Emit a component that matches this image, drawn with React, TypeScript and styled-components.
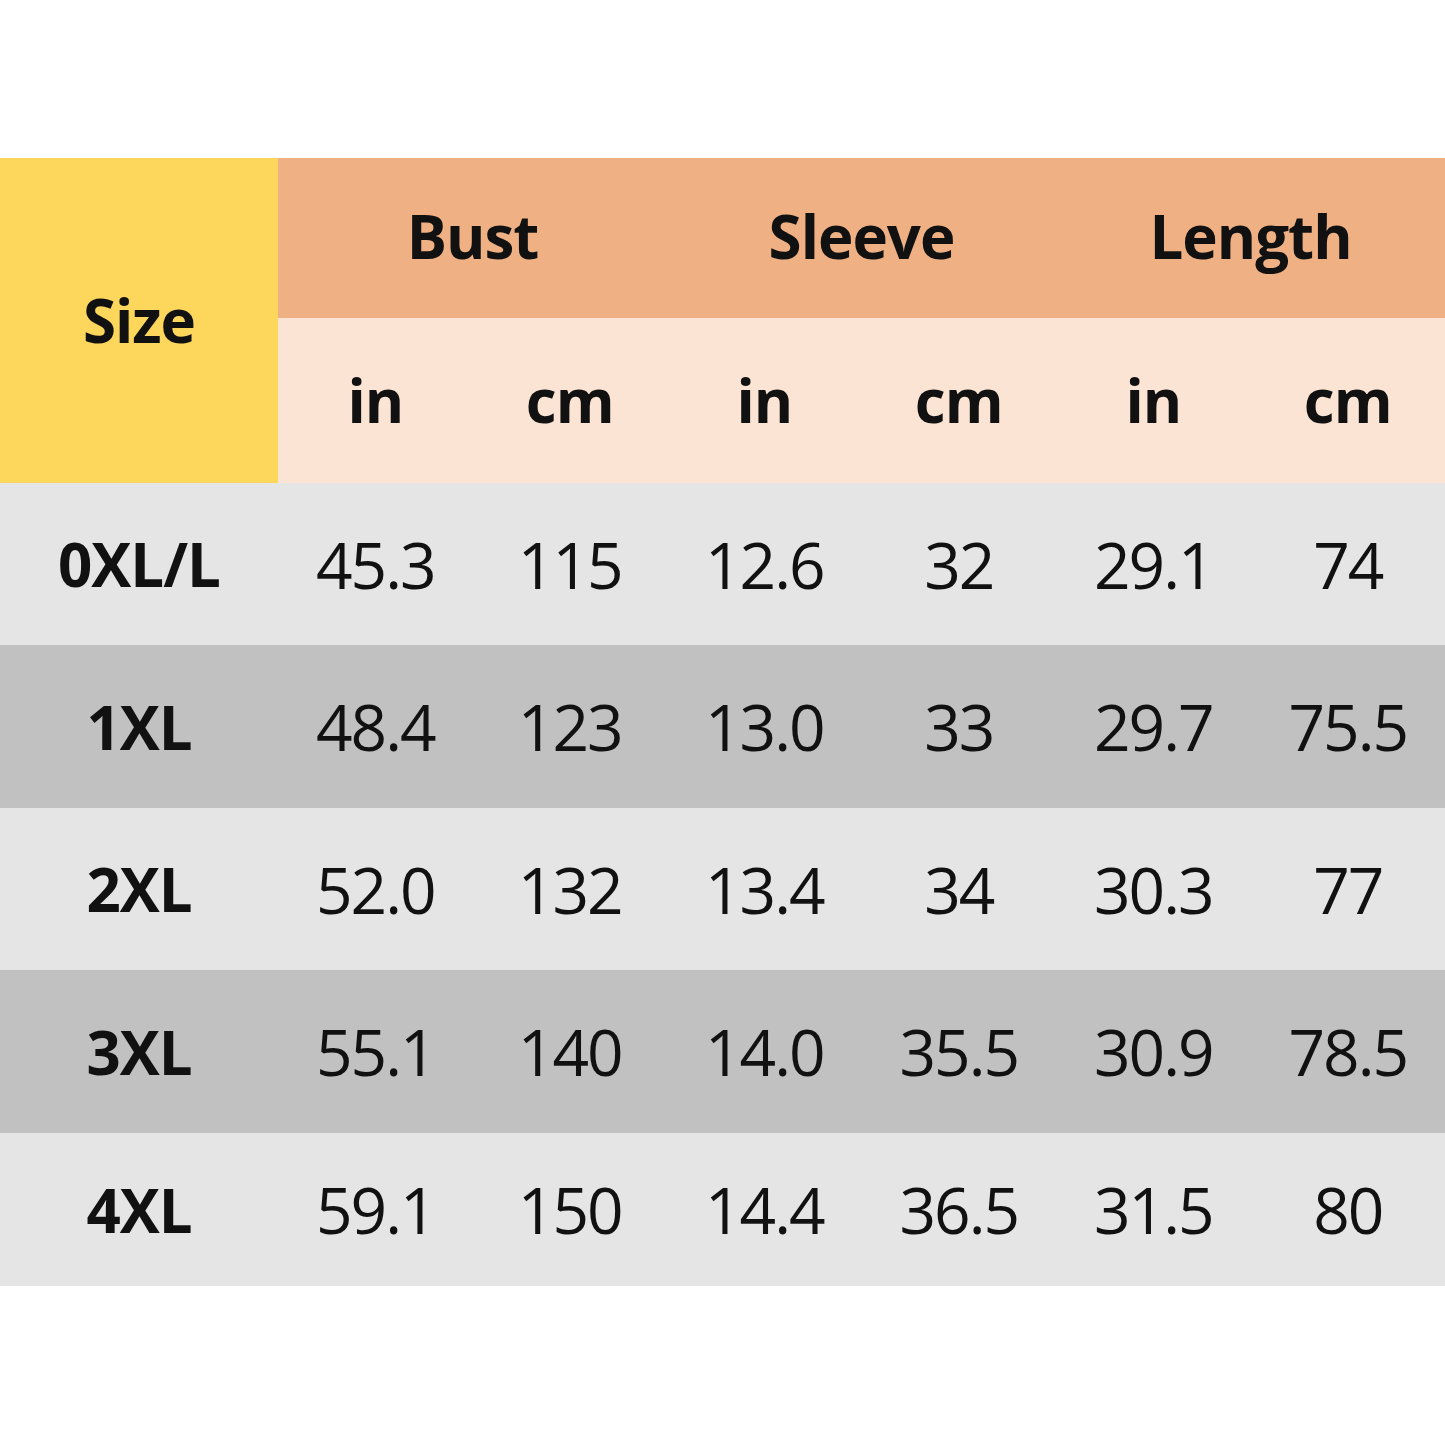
import * as React from "react";
import styled, { createGlobalStyle } from "styled-components";

const YELLOW = "#fdd75c";
const ORANGE = "#efb183";
const PEACH = "#fbe4d4";
const ROW_LIGHT = "#e5e5e5";
const ROW_DARK = "#c1c1c1";

const GlobalStyle = createGlobalStyle`
  html, body {
    margin: 0;
    padding: 0;
    background: #ffffff;
  }
  body {
    font-family: "Open Sans", "Noto Sans", sans-serif;
    color: #111111;
  }
`;

interface SizeRow {
  size: string;
  values: string[];
}

const ROWS: SizeRow[] = [
  { size: "0XL/L", values: ["45.3", "115", "12.6", "32", "29.1", "74"] },
  { size: "1XL", values: ["48.4", "123", "13.0", "33", "29.7", "75.5"] },
  { size: "2XL", values: ["52.0", "132", "13.4", "34", "30.3", "77"] },
  { size: "3XL", values: ["55.1", "140", "14.0", "35.5", "30.9", "78.5"] },
  { size: "4XL", values: ["59.1", "150", "14.4", "36.5", "31.5", "80"] },
];

const ROW_HEIGHTS = [162, 163, 162, 163, 153];

const GROUPS = ["Bust", "Sleeve", "Length"];

const Page = styled.div`
  width: 1445px;
  height: 1445px;
  padding-top: 158px;
  box-sizing: border-box;
`;

const Table = styled.div`
  display: grid;
  grid-template-columns: 278px repeat(6, 1fr);
  grid-template-rows: 160px 165px;
  grid-auto-rows: auto;
`;

const SizeHead = styled.div`
  grid-row: 1 / span 2;
  grid-column: 1;
  background: ${YELLOW};
  display: flex;
  align-items: center;
  justify-content: center;
  font-weight: 700;
  font-size: 60px;
  letter-spacing: -1px;
  padding-bottom: 2px;
`;

const GroupHead = styled.div`
  grid-column: span 2;
  background: ${ORANGE};
  display: flex;
  align-items: center;
  justify-content: center;
  font-weight: 700;
  font-size: 60px;
  letter-spacing: -1px;
  padding-bottom: 4px;
`;

const UnitHead = styled.div`
  background: ${PEACH};
  display: flex;
  align-items: center;
  justify-content: center;
  font-weight: 700;
  font-size: 60px;
  letter-spacing: -1px;
  padding-bottom: 2px;
`;

const Cell = styled.div<{ $dark: boolean; $height: number; $bold?: boolean }>`
  height: ${(p) => p.$height}px;
  background: ${(p) => (p.$dark ? ROW_DARK : ROW_LIGHT)};
  display: flex;
  align-items: center;
  justify-content: center;
  font-size: ${(p) => (p.$bold ? 60 : 64)}px;
  font-weight: ${(p) => (p.$bold ? 700 : 400)};
  letter-spacing: ${(p) => (p.$bold ? -1 : -2)}px;
`;

export default function App() {
  return (
    <Page>
      <GlobalStyle />
      <Table>
        <SizeHead>Size</SizeHead>
        {GROUPS.map((g) => (
          <GroupHead key={g}>{g}</GroupHead>
        ))}
        {GROUPS.map((g) => (
          <React.Fragment key={g}>
            <UnitHead>in</UnitHead>
            <UnitHead>cm</UnitHead>
          </React.Fragment>
        ))}
        {ROWS.map((r, i) => (
          <React.Fragment key={r.size}>
            <Cell $dark={i % 2 === 1} $height={ROW_HEIGHTS[i]} $bold>
              {r.size}
            </Cell>
            {r.values.map((v, j) => (
              <Cell key={j} $dark={i % 2 === 1} $height={ROW_HEIGHTS[i]}>
                {v}
              </Cell>
            ))}
          </React.Fragment>
        ))}
      </Table>
    </Page>
  );
}
